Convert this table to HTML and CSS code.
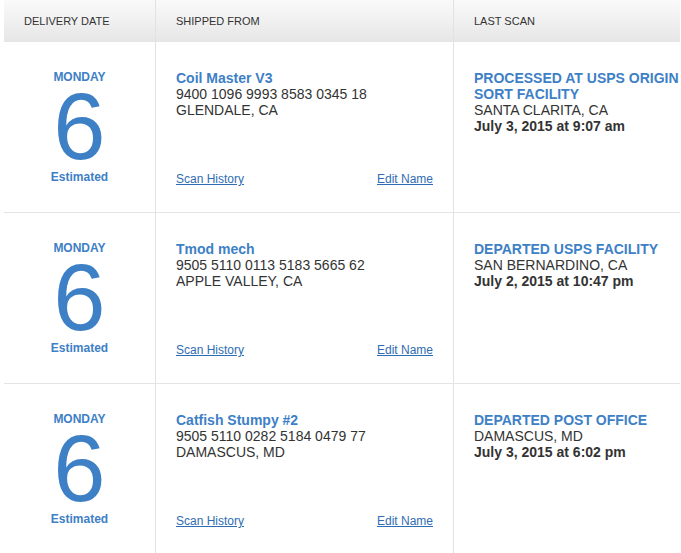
FILE: index.html
```html
<!DOCTYPE html>
<html lang="en">
<head>
    <meta charset="UTF-8">
    <meta name="viewport" content="width=device-width, initial-scale=1.0">
    <title>Tracking</title>
    <link rel="stylesheet" href="styles.css">
</head>
<body>
    <div class="tracking">
        <div class="head">
            <div class="head-cell col-date">Delivery Date</div>
            <div class="head-cell col-from">Shipped From</div>
            <div class="head-cell col-scan">Last Scan</div>
        </div>

        <div class="row">
            <div class="cell col-date">
                <span class="day">Monday</span>
                <span class="date">6</span>
                <span class="est">Estimated</span>
            </div>
            <div class="cell col-from">
                <div class="info">
                    <div class="name">Coil Master V3</div>
                    <div>9400 1096 9993 8583 0345 18</div>
                    <div>GLENDALE, CA</div>
                </div>
                <div class="links">
                    <a href="#">Scan History</a>
                    <a href="#">Edit Name</a>
                </div>
            </div>
            <div class="cell col-scan">
                <div class="status">Processed at USPS Origin Sort Facility</div>
                <div>SANTA CLARITA, CA</div>
                <div class="when">July 3, 2015 at 9:07 am</div>
            </div>
        </div>

        <div class="row">
            <div class="cell col-date">
                <span class="day">Monday</span>
                <span class="date">6</span>
                <span class="est">Estimated</span>
            </div>
            <div class="cell col-from">
                <div class="info">
                    <div class="name">Tmod mech</div>
                    <div>9505 5110 0113 5183 5665 62</div>
                    <div>APPLE VALLEY, CA</div>
                </div>
                <div class="links">
                    <a href="#">Scan History</a>
                    <a href="#">Edit Name</a>
                </div>
            </div>
            <div class="cell col-scan">
                <div class="status">Departed USPS Facility</div>
                <div>SAN BERNARDINO, CA</div>
                <div class="when">July 2, 2015 at 10:47 pm</div>
            </div>
        </div>

        <div class="row">
            <div class="cell col-date">
                <span class="day">Monday</span>
                <span class="date">6</span>
                <span class="est">Estimated</span>
            </div>
            <div class="cell col-from">
                <div class="info">
                    <div class="name">Catfish Stumpy #2</div>
                    <div>9505 5110 0282 5184 0479 77</div>
                    <div>DAMASCUS, MD</div>
                </div>
                <div class="links">
                    <a href="#">Scan History</a>
                    <a href="#">Edit Name</a>
                </div>
            </div>
            <div class="cell col-scan">
                <div class="status">Departed Post Office</div>
                <div>DAMASCUS, MD</div>
                <div class="when">July 3, 2015 at 6:02 pm</div>
            </div>
        </div>
    </div>
</body>
</html>
```

FILE: styles.css
```css
body {
    margin: 0;
    padding: 0 0 0 4px;
    background: #fff;
    font-family: "Liberation Sans", Arial, sans-serif;
    color: #333;
}

.tracking {
    width: 676px;
}

.head,
.row {
    display: grid;
    grid-template-columns: 152px 298px 226px;
}

.head {
    height: 42px;
    background: linear-gradient(#fafafa, #e6e6e6);
}

.head-cell {
    display: flex;
    align-items: center;
    padding-left: 20px;
    font-size: 11px;
    text-transform: uppercase;
    color: #333;
}

.col-date,
.col-from {
    border-right: 1px solid #e2e2e2;
}

.row {
    height: 171px;
    border-bottom: 1px solid #e4e4e4;
    box-sizing: border-box;
}

.cell {
    padding: 28px 20px 0;
    font-size: 14px;
    line-height: 16px;
}

.cell.col-date {
    padding: 28px 0 0;
    display: flex;
    flex-direction: column;
    align-items: center;
    color: #3d80c6;
    font-weight: bold;
}

.day {
    font-size: 12px;
    line-height: 14px;
    text-transform: uppercase;
}

.date {
    font-size: 94px;
    font-weight: normal;
    line-height: 86px;
}

.est {
    font-size: 12px;
    line-height: 14px;
}

.cell.col-from {
    display: flex;
    flex-direction: column;
    padding-bottom: 26px;
}

.name,
.status {
    color: #3d80c6;
    font-weight: bold;
}

.status {
    text-transform: uppercase;
}

.links {
    margin-top: auto;
    display: flex;
    justify-content: space-between;
    font-size: 12px;
    line-height: 14px;
}

.links a {
    color: #2f6db2;
}

.cell.col-scan {
    padding-right: 0;
}

.when {
    font-weight: bold;
}
```
